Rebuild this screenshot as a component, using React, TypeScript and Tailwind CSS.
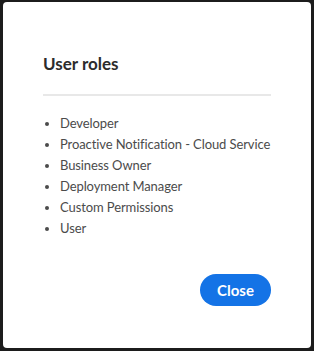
import React from 'react';

const roles = [
  'Developer',
  'Proactive Notification - Cloud Service',
  'Business Owner',
  'Deployment Manager',
  'Custom Permissions',
  'User',
];

const App: React.FC = () => {
  return (
    <div className="w-[314px] h-[351px] bg-[#1c1c1c] pl-[3px] pr-[3px] pt-[2px] pb-[3px]" style={{ fontFamily: 'Lato, "Open Sans", sans-serif' }}>
      <div className="w-full h-full bg-white rounded-[4px] flex flex-col px-[40px] pt-[50px]">
        <h2 className="text-[17px] leading-6 font-bold text-[#2c2c2c]">User roles</h2>
        <div className="mt-[18px] h-[2px] bg-[#e8e8e8]" />
        <ul className="mt-[17px] pl-[17px] list-disc marker:text-[#4b4b4b] text-[13px] tracking-[-0.1px] leading-[21px] text-[#4b4b4b]">
          {roles.map((r) => (
            <li key={r} className="whitespace-nowrap">{r}</li>
          ))}
        </ul>
        <div className="mt-auto mb-[42px] flex justify-end">
          <button className="h-[32px] w-[71px] rounded-full bg-[#1473e6] text-white font-bold text-[15px]">
            Close
          </button>
        </div>
      </div>
    </div>
  );
};

export default App;
